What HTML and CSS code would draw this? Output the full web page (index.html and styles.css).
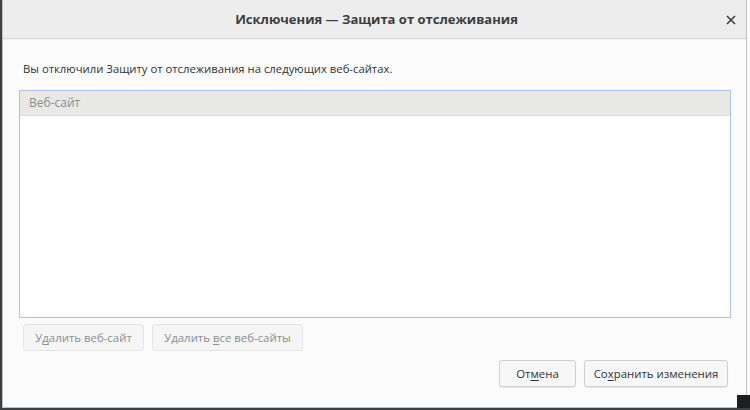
FILE: index.html
```html
<!DOCTYPE html>
<html lang="ru">
<head>
<meta charset="utf-8">
<link rel="stylesheet" href="styles.css">
</head>
<body>
<div class="screen">
  <div class="dialog">
    <div class="titlebar">
      <div class="title">Исключения — Защита от отслеживания</div>
      <div class="close">
        <svg width="10" height="10" viewBox="0 0 10 10"><path d="M1 1L9 9M9 1L1 9" stroke="#3a3d40" stroke-width="1.6" fill="none"/></svg>
      </div>
    </div>
    <div class="content">
      <p class="intro">Вы отключили Защиту от отслеживания на следующих веб-сайтах.</p>
      <div class="list">
        <div class="list-head">Веб-сайт</div>
        <div class="list-body"></div>
      </div>
      <div class="row-actions">
        <button class="btn disabled">У<u>д</u>алить веб-сайт</button>
        <button class="btn disabled">Удалить <u>в</u>се веб-сайты</button>
      </div>
      <div class="footer">
        <button class="btn">От<u>м</u>ена</button>
        <button class="btn">Со<u>х</u>ранить изменения</button>
      </div>
    </div>
  </div>
  <div class="corner"></div>
</div>
</body>
</html>
```
FILE: styles.css
```css
* { box-sizing: border-box; }
html, body { margin: 0; padding: 0; }
body {
  width: 750px;
  height: 410px;
  overflow: hidden;
  background: #ffffff;
  font-family: "Open Sans", "Noto Sans", sans-serif;
  color: #2e3436;
}
.screen {
  position: relative;
  width: 750px;
  height: 410px;
  border-left: 2px solid #3c4043;
  border-bottom: 2px solid #3c4043;
  background: #fdfdfd;
}
.dialog {
  width: 745px;
  height: 408px;
  border: 1px solid #c0c0bd;
  border-top: none;
  background: #fbfbfb;
  display: flex;
  flex-direction: column;
}
.titlebar {
  height: 39px;
  flex: none;
  background: #ededed;
  border-bottom: 1px solid #d6d6d4;
  box-shadow: 0 1px 0 #f2f2f2;
  display: flex;
  align-items: center;
  justify-content: center;
  position: relative;
}
.title {
  font-size: 13px;
  font-weight: 700;
  color: #3a3d40;
  padding-left: 4px;
}
.close {
  position: absolute;
  right: 10px;
  top: 15px;
  width: 10px;
  height: 10px;
  display: flex;
}
.content {
  flex: 1;
  display: flex;
  flex-direction: column;
  padding: 0 15px 0 16px;
}
.intro {
  margin: 21px 0 12px 4px;
  font-size: 11.3px;
  line-height: 18px;
  color: #2e3436;
}
.list {
  height: 228px;
  border: 1px solid #a9c3e6;
  background: #ffffff;
  display: flex;
  flex-direction: column;
}
.list-head {
  height: 25px;
  background: #e8e8e7;
  border-bottom: 1px solid #dcdcdc;
  font-size: 12px;
  color: #8c8e8f;
  padding: 3px 0 0 9px;
}
.list-body { flex: 1; }
.row-actions {
  display: flex;
  gap: 8px;
  margin: 6px 0 0 4px;
}
.btn {
  font-family: inherit;
  font-size: 11.4px;
  height: 27px;
  padding: 0;
  white-space: nowrap;
  border: 1px solid #cfcfcd;
  border-radius: 3px;
  background: #f7f7f7;
  color: #2e3436;
  box-shadow: 0 1px 1px rgba(0,0,0,0.08);
}
.btn.disabled {
  color: #8b8e8f;
  background: #f5f5f5;
  border-color: #e4e4e3;
  box-shadow: none;
}
.row-actions .btn:first-child { width: 121px; }
.row-actions .btn:last-child { width: 151px; }
.footer {
  display: flex;
  justify-content: flex-end;
  gap: 8px;
  margin-top: 9px;
  padding-right: 3px;
}
.footer .btn:first-child { width: 77px; }
.footer .btn:last-child { width: 144px; }
u { text-decoration-thickness: 1px; text-underline-offset: 2px; }
.corner {
  position: absolute;
  right: 0;
  bottom: 0;
  width: 13px;
  height: 13px;
  background: #1e1e1e;
}
```
